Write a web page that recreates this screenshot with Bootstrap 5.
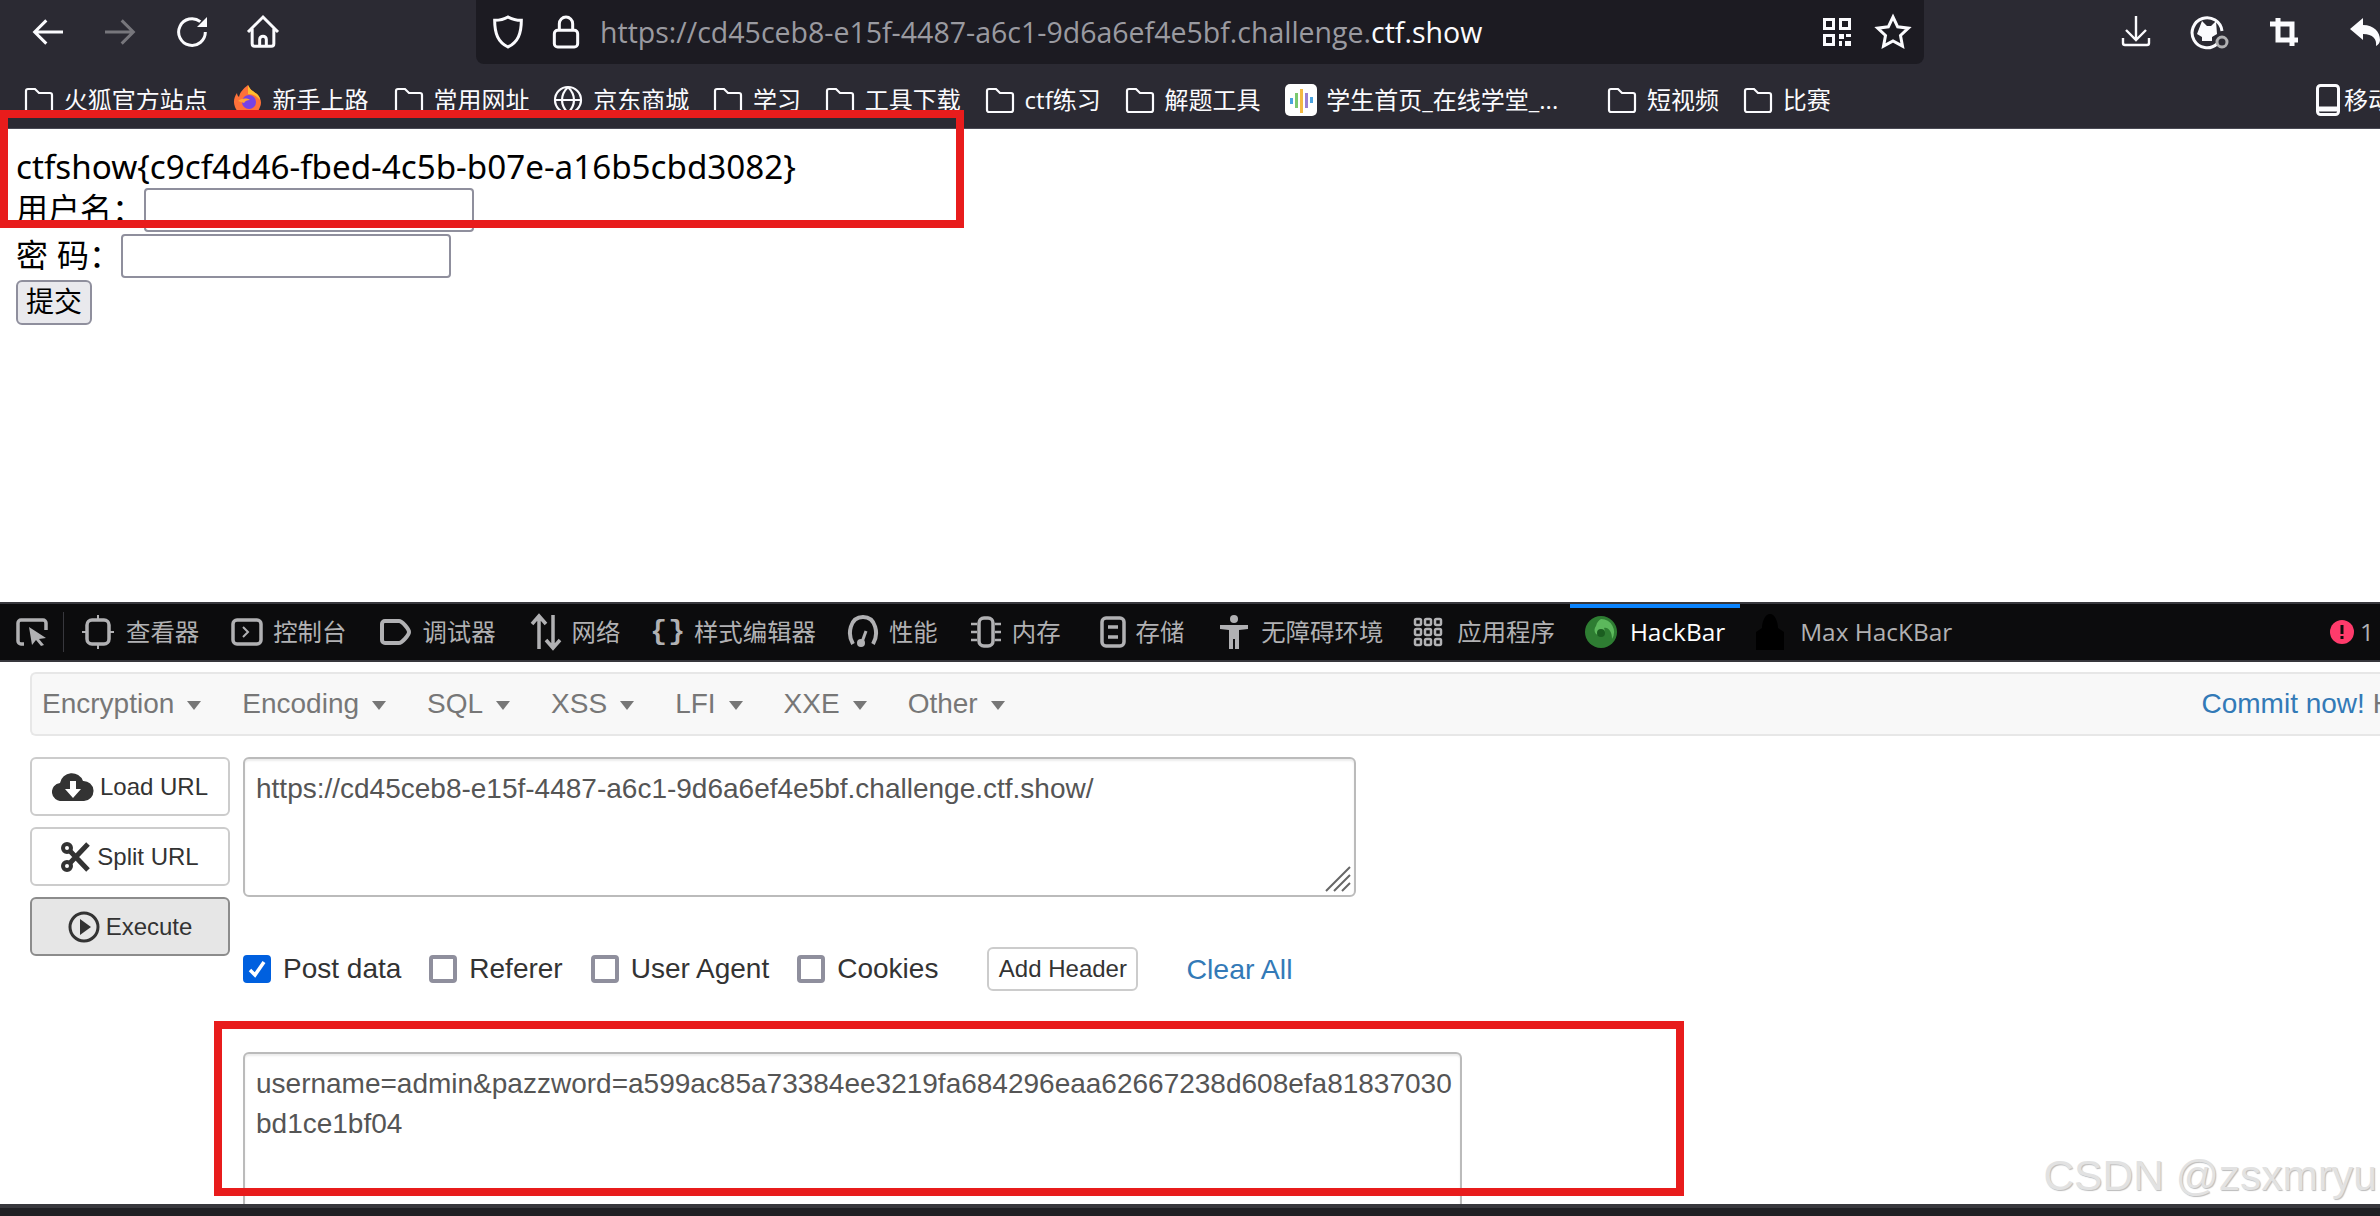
<!DOCTYPE html>
<html lang="zh"><head><meta charset="utf-8"><title>HackBar</title>
<link rel="stylesheet" href="https://cdn.jsdelivr.net/npm/bootstrap@5.3.0/dist/css/bootstrap.min.css">
<style>
html,body{height:100%;overflow:hidden}
body{width:2380px;height:1216px;position:relative;background:#fff;font-family:"Liberation Sans","Noto Sans CJK SC",sans-serif;color:#000}
.cjk{font-family:"Open Sans","Noto Sans CJK SC",sans-serif}
.chrome{height:129px;background:#2b2a33;border-bottom:1px solid #4a4a55;color:#fbfbfe;flex:none}
.tbar{height:64px}
.navico{width:40px;height:40px;stroke:#fbfbfe;fill:none;stroke-width:1.8;flex:none}
.urlbox{width:1448px;height:64px;background:#1c1b22;border-radius:0 0 8px 8px;margin-left:476px;font-size:28.500px;color:#9a9aa0;padding-left:30px;position:absolute;left:0;top:0}
.urlbox b{font-weight:400;color:#fbfbfe}
.bmarks{height:64px;padding:8px 0 0 24px;font-size:24px;white-space:nowrap;color:#fbfbfe;overflow:hidden}
.bm{display:flex;align-items:center;gap:9.800px;line-height:1}
.bm svg{flex:none}
.pagezone{height:473px;padding:0 16px;font-size:32px;line-height:1;flex:none}
.flag{padding-top:19px;height:58px;line-height:38px;font-family:"Noto Sans",sans-serif;font-size:33.200px}
.frow{height:46px;display:flex;align-items:center}
.frow input{width:330px;height:44px;border:2px solid #8f8f9d;border-radius:4px;background:#fff;padding:0}
.subbtn{width:76px;height:45px;border:2px solid #8f8f9d;border-radius:6px;background:#e9e9ed;font-size:28px;padding:0;line-height:1;display:block;margin-top:1px}
.dtools{height:56px;background:#0c0c0d;border-top:2px solid #38383d;border-bottom:2px solid #38383d;box-sizing:content-box;color:#b1b1b3;font-size:24.400px;white-space:nowrap;flex:none;position:relative}
.dt{display:flex;align-items:center;gap:10px;height:100%;line-height:1}
.dt svg{flex:none}
.dt.on{color:#fff;position:relative}
.hnav{height:64px;margin:10px 0 0 30px;background:#f8f8f8;border:2px solid #e7e7e7;border-right:0;border-radius:6px 0 0 6px;color:#777;font-size:28px;padding-left:10px;white-space:nowrap;flex:none}
.caret-d{display:inline-block;border-left:7px solid transparent;border-right:7px solid transparent;border-top:9px solid #777;margin-left:13px;vertical-align:middle}
.hnav .it{margin-right:41px}
.commit{color:#337ab7;margin-left:auto;margin-right:-100px;white-space:nowrap}
.commit span{color:#777}
.hbody{padding:21px 0 0 30px;font-size:24px;color:#555}
.sidebtn{width:200px;height:59px;border:2px solid #ccc;border-radius:6px;background:#fff;color:#333;font-size:24px;padding:0;gap:6px;margin-bottom:11px}
.sidebtn.act{background:#e6e6e6;border-color:#8c8c8c}
.tarea{display:block;width:1113px;height:140px;border:2px solid #bbb;border-radius:6px;box-shadow:inset 0 2px 2px rgba(0,0,0,.08);font-size:28px;line-height:40px;color:#555;padding:10px 11px;position:relative;white-space:nowrap}
.grip{position:absolute;right:2px;bottom:2px;width:30px;height:30px}
.tarea2{width:1219px;height:170px;border-bottom:0;border-radius:6px 6px 0 0;padding:10px 11px;margin-top:55px}
.opts{height:56px;margin-top:44px;font-size:28px;color:#333;white-space:nowrap}
.cb{width:28px;height:28px;border:4px solid #8f8f9d;border-radius:4px;margin-right:12px;flex:none;display:block;background:#fff}
.cb.ck{background:#0060df;border-color:#0060df;position:relative}
.opt{display:flex;align-items:center;margin-right:28px;line-height:1}
.addh{width:151px;height:44px;border:2px solid #ccc;border-radius:6px;font-size:24px;color:#333;background:#fff;padding:0;margin-left:21px}
.clr{color:#337ab7;margin-left:48px;font-size:28.500px}
.redbox{position:absolute;border:8px solid #e81c1c;background:transparent;pointer-events:none;z-index:5}
.r1{left:0;top:110px;width:964px;height:118px}
.r2{left:214px;top:1021px;width:1470px;height:175px}
.wm{position:absolute;right:3px;top:1147px;font-size:42.500px;line-height:58px;color:#e2e2e2;text-shadow:1px 1px 1px #bbb;z-index:6;white-space:nowrap}
.foot{position:absolute;left:0;right:0;bottom:0;height:12px;background:#202024;border-top:4px solid #38383d;z-index:7}
</style></head>
<body class="d-flex flex-column">
<svg width="0" height="0" class="position-absolute"><symbol id="fld" viewBox="0 0 30 30"><path d="M2 6a2 2 0 0 1 2-2h7l4 4h11a2 2 0 0 1 2 2v15a2 2 0 0 1-2 2H4a2 2 0 0 1-2-2z" fill="none" stroke="#fbfbfe" stroke-width="2.200"/></symbol></svg>
<header class="chrome">
 <div class="tbar position-relative">
  <svg class="navico position-absolute" style="left:28px;top:12px" viewBox="0 0 24 24"><path d="M21 12H4M11 5l-7 7 7 7"/></svg>
  <svg class="navico position-absolute" style="left:100px;top:12px;stroke:#77767c" viewBox="0 0 24 24"><path d="M3 12h17M13 5l7 7-7 7"/></svg>
  <svg class="navico position-absolute" style="left:172px;top:12px" viewBox="0 0 24 24"><path d="M20 12a8 8 0 1 1-3-6.200"/><path d="M21 3v6h-6z" fill="#fbfbfe" stroke="none"/></svg>
  <svg class="navico position-absolute" style="left:243px;top:12px" viewBox="0 0 24 24"><path d="M3 12l9-9 9 9M5.500 10v9a1.500 1.500 0 0 0 1.500 1.500h10a1.500 1.500 0 0 0 1.500-1.500v-9M10 20.500v-4a2 2 0 0 1 4 0v4"/></svg>
  <div class="urlbox d-flex align-items-center cjk">
   <svg class="navico" viewBox="0 0 24 24" style="margin-left:-18px;margin-right:0"><path d="M12 3c2.500 1.500 5 2 8 2 0 8-2 13-8 16-6-3-8-8-8-16 3 0 5.500-.5 8-2z"/></svg>
   <svg class="navico" style="margin-left:18px" viewBox="0 0 24 24"><rect x="5" y="11" width="14" height="10" rx="2"/><path d="M8 11V7a4 4 0 0 1 8 0v4"/></svg>
   <span style="margin-left:14px">https://cd45ceb8-e15f-4487-a6c1-9d6a6ef4e5bf.challenge.<b>ctf.show</b></span>
  </div>
  <svg class="position-absolute" style="left:1822px;top:17px" width="30" height="30" viewBox="0 0 30 30" fill="#fbfbfe"><path d="M1 1h12v12H1zM4 4v6h6V4zM17 1h12v12H17zM20 4v6h6V4zM1 17h12v12H1zM4 20v6h6v-6zM17 17h5v5h-5zM24 17h5v3h-5zM17 24h3v5h-3zM23 24h6v5h-6z" fill-rule="evenodd"/></svg>
  <svg class="navico position-absolute" style="left:1873px;top:12px" viewBox="0 0 24 24"><path d="M12 3l2.800 5.900 6.400.8-4.700 4.400 1.200 6.400-5.700-3.100-5.700 3.100 1.200-6.400L2.800 9.700l6.400-.8z"/></svg>
  <svg class="position-absolute" style="left:2120px;top:14px" width="32" height="34" viewBox="0 0 32 34" fill="none" stroke="#fbfbfe" stroke-width="2.400"><path d="M16 2v24M6 16l10 10 10-10M3 24v5a2 2 0 0 0 2 2h22a2 2 0 0 0 2-2v-5"/></svg>
  <svg class="position-absolute" style="left:2190px;top:14px" width="40" height="36" viewBox="0 0 40 36"><path d="M27 30A15 15 0 1 1 32 17" fill="none" stroke="#fbfbfe" stroke-width="3"/><path d="M12 7l5 5h4l5-5 1 13-5 3v4h-10v-4l-5-3z" fill="#fbfbfe"/><circle cx="32" cy="28" r="5" fill="none" stroke="#b1b1b3" stroke-width="3"/></svg>
  <svg class="position-absolute" style="left:2270px;top:18px" width="28" height="28" viewBox="0 0 28 28" fill="none" stroke="#fbfbfe" stroke-width="5"><path d="M8 0v22h20M0 6h22v22"/></svg>
  <svg class="position-absolute" style="left:2350px;top:18px" width="30" height="28" viewBox="0 0 30 28" fill="#fbfbfe"><path d="M0 11L13 0v7c11 0 17 7 17 15 0 3-2 5-4 6 1-7-3-12-13-12v6z"/></svg>
 </div>
 <div class="bmarks d-flex align-items-center cjk position-relative">
  <div class="bm" style="margin-right:25px"><svg width="30" height="30"><use href="#fld"/></svg>火狐官方站点</div>
  <div class="bm" style="margin-right:25px"><svg width="30" height="32" viewBox="0 0 30 32"><path d="M15 1c2 5 5 6 9 9 4 4 5 9 3 13-2 6-7 8-12 8S4 29 2 23C0 18 1 13 4 9c0 2 1 3 2 4 1-5 4-8 9-12z" fill="#ff7139"/><path d="M15 1c2 5 5 6 9 9 2 2 3 4 3 6-3-4-7-6-12-6z" fill="#ffbd2e"/><circle cx="16" cy="18" r="7" fill="#7542e5"/><path d="M5 17c4-3 9-3 12-1-3 0-5 1-6 3z" fill="#ffa436"/></svg>新手上路</div>
  <div class="bm" style="margin-right:24px"><svg width="30" height="30"><use href="#fld"/></svg>常用网址</div>
  <div class="bm" style="margin-right:24px"><svg width="30" height="30" viewBox="0 0 30 30" fill="none" stroke="#fbfbfe" stroke-width="2.200"><circle cx="15" cy="15" r="13"/><path d="M2 15h26M15 2c-8 8-8 18 0 26M15 2c8 8 8 18 0 26"/></svg>京东商城</div>
  <div class="bm" style="margin-right:24px"><svg width="30" height="30"><use href="#fld"/></svg>学习</div>
  <div class="bm" style="margin-right:24px"><svg width="30" height="30"><use href="#fld"/></svg>工具下载</div>
  <div class="bm" style="margin-right:24px"><svg width="30" height="30"><use href="#fld"/></svg>ctf练习</div>
  <div class="bm" style="margin-right:24px"><svg width="30" height="30"><use href="#fld"/></svg>解题工具</div>
  <div class="bm" style="margin-right:49px"><svg width="32" height="32" viewBox="0 0 32 32"><rect width="32" height="32" rx="5" fill="#fff"/><path d="M5 14h3v6H5z" fill="#4aa3df"/><path d="M10 9h3v15h-3z" fill="#7bc96f"/><path d="M15 5h3v24h-3z" fill="#f4b942"/><path d="M20 9h3v15h-3z" fill="#9b7fd1"/><path d="M25 13h3v6h-3z" fill="#4aa3df"/></svg>学生首页_在线学堂_...</div>
  <div class="bm" style="margin-right:24px"><svg width="30" height="30"><use href="#fld"/></svg>短视频</div>
  <div class="bm"><svg width="30" height="30"><use href="#fld"/></svg>比赛</div>
  <div class="bm position-absolute" style="left:2316px;top:20px;gap:4px"><svg width="24" height="32" viewBox="0 0 24 32" fill="none" stroke="#fbfbfe" stroke-width="3"><rect x="1.500" y="1.500" width="21" height="29" rx="3"/><path d="M1 25h22" stroke-width="5"/></svg>移动设备</div>
 </div>
</header>
<main class="pagezone">
 <div class="flag">ctfshow{c9cf4d46-fbed-4c5b-b07e-a16b5cbd3082}</div>
 <form>
 <div class="frow"><label for="u">用户名：</label><input id="u" type="text"></div>
 <div class="frow"><label for="p">密 码：</label><input id="p" type="text"></div>
 <button type="button" class="subbtn">提交</button>
 </form>
</main>
<nav class="dtools d-flex align-items-center cjk">
 <div class="dt" style="padding-left:16px;width:64px;border-right:1px solid #38383d;height:40px"><svg width="32" height="28" viewBox="0 0 32 28" fill="none" stroke="#b1b1b3" stroke-width="3.500"><path d="M8 26H5a3 3 0 0 1-3-3V5a3 3 0 0 1 3-3h22a3 3 0 0 1 3 3v7"/><path d="M13 9l17 11-7 1 5 6-3 1-5-6-4 5z" fill="#b1b1b3" stroke="none"/></svg></div>
 <div class="dt" style="margin-left:18px"><svg width="32" height="34" viewBox="0 0 32 34" fill="none" stroke="#b1b1b3" stroke-width="3.500"><rect x="5" y="5" width="22" height="24" rx="5"/><path d="M0 17h5M27 17h5M16 0v5M16 29v5" stroke-width="2"/></svg><span style="margin-left:2px">查看器</span></div>
 <div class="dt" style="margin-left:32px"><svg width="32" height="28" viewBox="0 0 32 28" fill="none" stroke="#b1b1b3" stroke-width="3.500"><rect x="2" y="2" width="28" height="24" rx="4"/><path d="M12 9l5 5-5 5" stroke-width="2"/></svg>控制台</div>
 <div class="dt" style="margin-left:34px"><svg width="32" height="26" viewBox="0 0 32 26" fill="none" stroke="#b1b1b3" stroke-width="4"><path d="M5 2h14c3 0 10 8 10 11s-7 11-10 11H5a3 3 0 0 1-3-3V5a3 3 0 0 1 3-3z"/></svg>调试器</div>
 <div class="dt" style="margin-left:34px"><svg width="32" height="38" viewBox="0 0 32 38" fill="none" stroke="#b1b1b3" stroke-width="3.500"><path d="M9 36V3M2 11l7-8 7 8M23 2v33M16 27l7 8 7-8"/></svg>网络</div>
 <div class="dt" style="margin-left:30px;gap:12px"><span style="font-size:28px;letter-spacing:1px;font-weight:700;font-family:'Liberation Mono',monospace;margin-right:-4px">{}</span>样式编辑器</div>
 <div class="dt" style="margin-left:31px"><svg width="32" height="36" viewBox="0 0 32 36" fill="none" stroke="#b1b1b3" stroke-width="4"><path d="M6 30C0 20 3 3 16 3s16 17 10 27"/><circle cx="14" cy="29" r="4" fill="#b1b1b3" stroke="none"/><path d="M15 28l4-11" stroke-width="3"/></svg>性能</div>
 <div class="dt" style="margin-left:32px;gap:10px"><svg width="32" height="36" viewBox="0 0 32 36" fill="none" stroke="#b1b1b3" stroke-width="3.500"><rect x="9" y="4" width="14" height="28" rx="5"/><path d="M1 10h6M1 18h6M1 26h6M25 10h6M25 18h6M25 26h6" stroke-width="2.500"/></svg>内存</div>
 <div class="dt" style="margin-left:39px"><svg width="26" height="32" viewBox="0 0 26 32" fill="none" stroke="#b1b1b3" stroke-width="3.500"><rect x="2" y="2" width="22" height="28" rx="4"/><path d="M8 11h10M8 21h10"/></svg>存储</div>
 <div class="dt" style="margin-left:35px;gap:12px"><svg width="30" height="34" viewBox="0 0 30 34" fill="#b1b1b3"><circle cx="15" cy="4" r="4"/><path d="M1 10h28v4l-9 1v19h-4V24h-2v10h-4V15l-9-1z"/></svg>无障碍环境</div>
 <div class="dt" style="margin-left:30px;gap:14px"><svg width="30" height="30" viewBox="0 0 30 30" fill="none" stroke="#b1b1b3" stroke-width="2.500"><rect x="2" y="2" width="6" height="6" rx="1.500"/><rect x="12" y="2" width="6" height="6" rx="1.500"/><rect x="22" y="2" width="6" height="6" rx="1.500"/><rect x="2" y="12" width="6" height="6" rx="1.500"/><rect x="12" y="12" width="6" height="6" rx="1.500"/><rect x="22" y="12" width="6" height="6" rx="1.500"/><rect x="2" y="22" width="6" height="6" rx="1.500"/><rect x="12" y="22" width="6" height="6" rx="1.500"/><rect x="22" y="22" width="6" height="6" rx="1.500"/></svg>应用程序</div>
 <div class="dt on" style="margin-left:29px;gap:12px"><svg width="34" height="32" viewBox="0 0 34 32"><circle cx="17" cy="16" r="16" fill="#2e7d32"/><path d="M17 3a13 13 0 0 1 11 20c0-8-4-12-8-11 2 4-1 8-5 7-4 0-6-5-3-9 1-4 3-6 5-7z" fill="#5cb85c"/><circle cx="17" cy="17" r="4" fill="#1b5e20"/></svg>HackBar</div>
 <div class="dt" style="margin-left:29px;gap:14px"><svg width="32" height="36" viewBox="0 0 32 36" fill="#000"><path d="M16 0c5 0 8 8 8 14l6 4v18H2V18l6-4C8 8 11 0 16 0z"/></svg>Max HacKBar</div>
 <div class="dt position-absolute" style="left:2330px;top:0;gap:6px"><svg width="24" height="24" viewBox="0 0 24 24"><circle cx="12" cy="12" r="12" fill="#ff3b6b"/><path d="M10.500 5h3v9h-3zM10.500 16h3v3h-3z" fill="#0c0c0d"/></svg>1</div>
</nav>
<div class="position-absolute" style="left:1570px;top:604px;width:170px;height:4px;background:#0a84ff;z-index:2"></div>
<div class="hnav d-flex align-items-center">
 <span class="it">Encryption<i class="caret-d"></i></span>
 <span class="it">Encoding<i class="caret-d"></i></span>
 <span class="it">SQL<i class="caret-d"></i></span>
 <span class="it">XSS<i class="caret-d"></i></span>
 <span class="it">LFI<i class="caret-d"></i></span>
 <span class="it">XXE<i class="caret-d"></i></span>
 <span class="it">Other<i class="caret-d"></i></span>
 <span class="commit">Commit now! <span>HackBar</span></span>
</div>
<div class="hbody d-flex gap-0">
 <div class="d-flex flex-column" style="width:213px">
  <button type="button" class="sidebtn d-flex align-items-center justify-content-center"><svg width="42" height="28" viewBox="0 0 42 28"><path d="M10 28a9 9 0 0 1-2-18 12 12 0 0 1 23-2 10 10 0 0 1 1 20z" fill="#333"/><path d="M18 8h6v8h5l-8 9-8-9h5z" fill="#fff"/></svg>Load URL</button>
  <button type="button" class="sidebtn d-flex align-items-center justify-content-center"><svg width="30" height="30" viewBox="0 0 30 30" fill="none" stroke="#333" stroke-width="4"><circle cx="6" cy="6" r="4"/><circle cx="6" cy="24" r="4"/><path d="M9 9l18 19M9 21L27 2" stroke-width="5"/></svg>Split URL</button>
  <button type="button" class="sidebtn act d-flex align-items-center justify-content-center"><svg width="32" height="32" viewBox="0 0 32 32"><circle cx="16" cy="16" r="14" fill="none" stroke="#333" stroke-width="3"/><path d="M12 8l11 8-11 8z" fill="#333"/></svg>Execute</button>
 </div>
 <div class="flex-grow-0">
  <div class="tarea">https://cd45ceb8-e15f-4487-a6c1-9d6a6ef4e5bf.challenge.ctf.show/<svg class="grip" viewBox="0 0 30 30" stroke="#666" stroke-width="2"><path d="M4 28L28 4M12 28L28 12M20 28l8-8"/></svg></div>
  <div class="opts d-flex align-items-center">
   <span class="opt"><span class="cb ck d-flex align-items-center justify-content-center"><svg width="20" height="20" viewBox="0 0 20 20" fill="none" stroke="#fff" stroke-width="3.500"><path d="M3 11l5 5 9-13"/></svg></span>Post data</span>
   <span class="opt"><span class="cb"></span>Referer</span>
   <span class="opt"><span class="cb"></span>User Agent</span>
   <span class="opt"><span class="cb"></span>Cookies</span>
   <button type="button" class="addh">Add Header</button>
   <span class="clr">Clear All</span>
  </div>
  <div class="tarea tarea2">username=admin&amp;pazzword=a599ac85a73384ee3219fa684296eaa62667238d608efa81837030<br>bd1ce1bf04</div>
 </div>
</div>
<div class="redbox r1"></div>
<div class="redbox r2"></div>
<div class="wm">CSDN @zsxmryu</div>
<div class="foot"></div>
</body></html>
